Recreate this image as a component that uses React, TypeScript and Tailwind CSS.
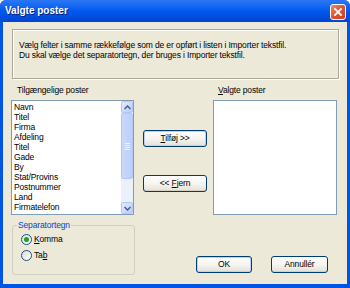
import React from "react";

const items = ["Navn","Titel","Firma","Afdeling","Titel","Gade","By","Stat/Provins","Postnummer","Land","Firmatelefon"];

function XPButton({ children, w, def }: { children: React.ReactNode; w: string; def?: boolean }) {
  return (
    <div className={`${w} h-[17px] rounded-[3px] border border-[#003c74] bg-gradient-to-b from-[#ffffff] via-[#f6f5f0] to-[#e3e1d6] flex items-center justify-center text-black ${def ? "shadow-[inset_0_0_0_1px_#bdd0f6]" : "shadow-[inset_0_-1px_0_#d6d0c5]"}`}>
      <span className="leading-none">{children}</span>
    </div>
  );
}

function Radio({ checked }: { checked?: boolean }) {
  return (
    <div className="w-[11px] h-[11px] rounded-full border border-[#1c5180] bg-gradient-to-br from-[#dcdbd5] to-[#ffffff] flex items-center justify-center">
      {checked && <div className="w-[5px] h-[5px] rounded-full bg-[#21a121]" />}
    </div>
  );
}

export default function App() {
  return (
    <div className="w-[350px] h-[288px] bg-[#0054e3] flex flex-col overflow-hidden rounded-t-[6px] text-[8.5px] tracking-[-0.15px] text-black" style={{ fontFamily: '"Liberation Sans", Arial, sans-serif' }}>
      {/* Title bar */}
      <div className="h-[22px] shrink-0 flex items-center justify-between pl-[5px] pr-[4px] bg-gradient-to-b from-[#2b78f5] via-[#0058ee] to-[#0046d0]">
        <span className="text-white font-bold text-[10px] leading-none tracking-normal" style={{ textShadow: "1px 1px 0 #0a1f80" }}>Valgte poster</span>
        <div className="w-[16px] h-[16px] rounded-[3px] border border-white bg-gradient-to-br from-[#e88a6c] via-[#e0522e] to-[#c8421f] flex items-center justify-center mt-[1px]">
          <svg width="10" height="10" viewBox="0 0 10 10">
            <path d="M2 2 L8 8 M8 2 L2 8" stroke="white" strokeWidth="1.8" strokeLinecap="square" />
          </svg>
        </div>
      </div>
      {/* Body */}
      <div className="flex-1 mx-[3px] mb-[4px] bg-[#ece9d8] flex flex-col pt-[7px]">
        {/* description */}
        <div className="ml-[9px] mr-[8px] h-[50px] border border-[#aca899] shadow-[inset_1px_1px_0_#ffffff,1px_1px_0_#ffffff] pl-[6px] pt-[10px] leading-[10px]">
          <div>Vælg felter i samme rækkefølge som de er opført i listen i Importer tekstfil.</div>
          <div>Du skal vælge det separatortegn, der bruges i Importer tekstfil.</div>
        </div>
        {/* lists row */}
        <div className="flex mt-[6px] ml-[8px]">
          <div className="flex flex-col w-[123px]">
            <div className="pl-[6px] h-[15px] leading-[10px]">Tilgængelige poster</div>
            <div className="h-[115px] border border-[#7f9db9] bg-white flex">
              <div className="flex-1 pl-[2px] pt-[1px] leading-[10px]">
                {items.map((t, i) => (
                  <div key={i} className="h-[10px]">{t}</div>
                ))}
              </div>
              <div className="w-[12px] flex flex-col bg-[#eaf0fc]">
                <div className="h-[12px] rounded-[2px] border border-[#b3c8f5] bg-gradient-to-br from-[#e3ebfe] to-[#b8cbf9] flex items-center justify-center">
                  <svg width="7" height="5" viewBox="0 0 7 5"><path d="M0.5 4 L3.5 1 L6.5 4" stroke="#4d6185" strokeWidth="1.5" fill="none" /></svg>
                </div>
                <div className="h-[66px] rounded-[2px] border border-[#b3c8f5] bg-gradient-to-r from-[#c9d8fc] to-[#bccffb] flex flex-col items-center justify-center gap-[1px]">
                  <div className="w-[5px] h-px bg-[#eef3fe]" />
                  <div className="w-[5px] h-px bg-[#eef3fe]" />
                  <div className="w-[5px] h-px bg-[#eef3fe]" />
                  <div className="w-[5px] h-px bg-[#eef3fe]" />
                </div>
                <div className="flex-1" />
                <div className="h-[12px] rounded-[2px] border border-[#b3c8f5] bg-gradient-to-br from-[#e3ebfe] to-[#b8cbf9] flex items-center justify-center">
                  <svg width="7" height="5" viewBox="0 0 7 5"><path d="M0.5 1 L3.5 4 L6.5 1" stroke="#4d6185" strokeWidth="1.5" fill="none" /></svg>
                </div>
              </div>
            </div>
          </div>
          <div className="flex flex-col ml-[9px] pt-[45px]">
            <XPButton w="w-[64px]" def><span className="underline">T</span>ilføj &gt;&gt;</XPButton>
            <div className="mt-[28px]">
              <XPButton w="w-[64px]">&lt;&lt; <span className="underline">F</span>jern</XPButton>
            </div>
          </div>
          <div className="flex flex-col w-[124px] ml-[6px]">
            <div className="pl-[5px] h-[15px] leading-[10px]"><span className="underline">V</span>algte poster</div>
            <div className="h-[115px] border border-[#7f9db9] bg-white" />
          </div>
        </div>
        {/* bottom row */}
        <div className="flex mt-[6px] ml-[9px]">
          <div className="relative w-[123px] h-[54px] pt-[4px]">
            <div className="h-[50px] border border-[#d0d0bf] rounded-[3px] flex flex-col pl-[8px] pt-[8px] gap-[5px]">
              <div className="flex items-center gap-[2px] h-[11px]"><Radio checked /><span className="leading-none"><span className="underline">K</span>omma</span></div>
              <div className="flex items-center gap-[2px] h-[11px]"><Radio /><span className="leading-none">Ta<span className="underline">b</span></span></div>
            </div>
            <span className="absolute left-[5px] top-0 px-[1px] bg-[#ece9d8] text-[#0046d5] leading-[8px]">Separatortegn</span>
          </div>
          <div className="flex-1 flex items-start justify-end gap-[19px] pt-[35px] pr-[19px]">
            <XPButton w="w-[56px]" def>OK</XPButton>
            <XPButton w="w-[57px]">Annullér</XPButton>
          </div>
        </div>
      </div>
    </div>
  );
}
